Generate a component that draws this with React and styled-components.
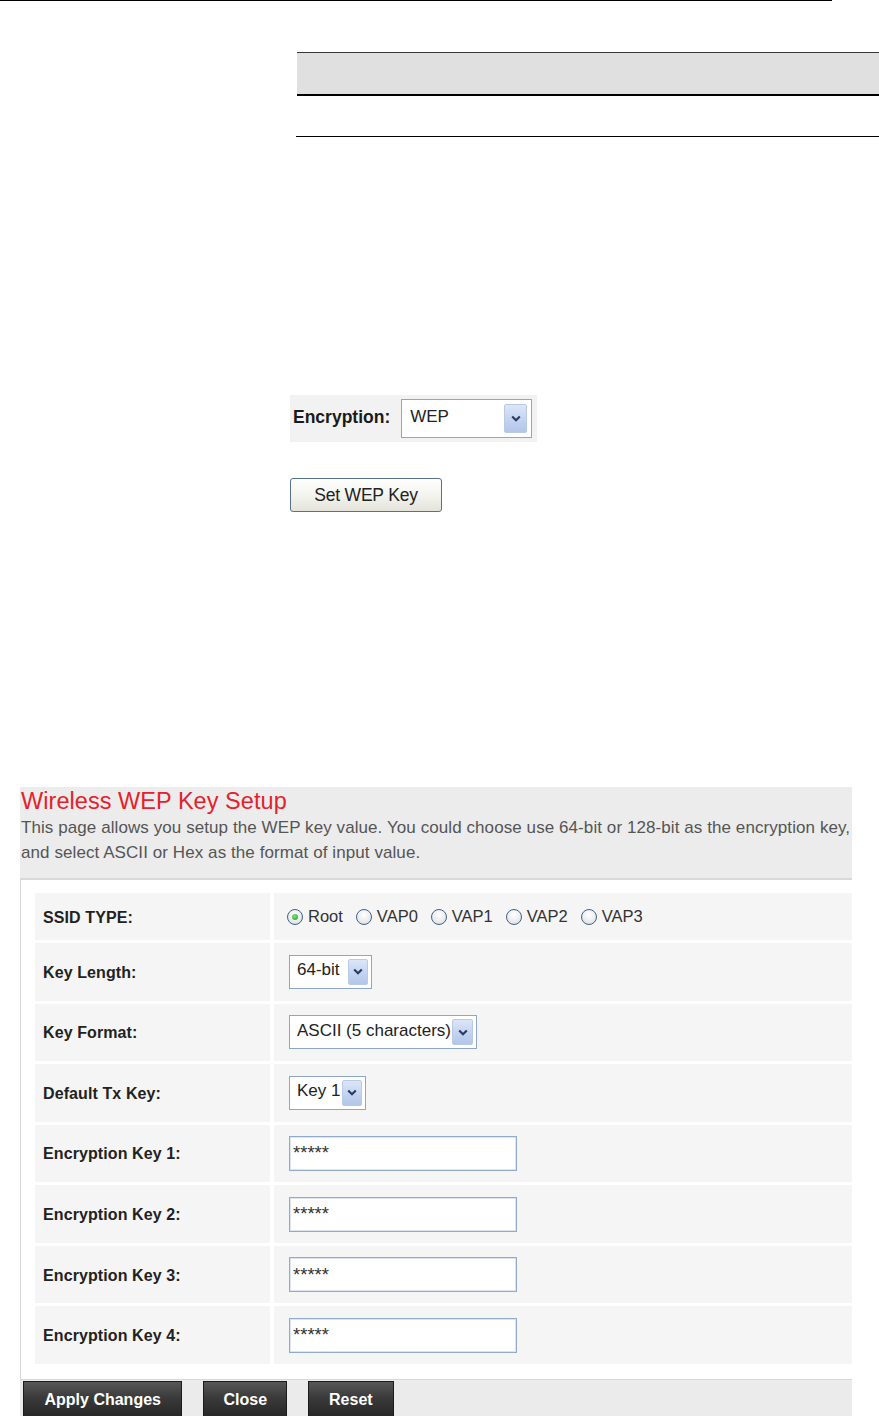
import React from "react";
import styled, { createGlobalStyle, css } from "styled-components";

const GlobalStyle = createGlobalStyle`
  *, *::before, *::after { box-sizing: border-box; }
  html, body { margin: 0; padding: 0; background: #fff; overflow: hidden; }
  body { font-family: "Liberation Sans", Arial, sans-serif; color: #222; }
`;

const Page = styled.div`
  width: 879px;
  height: 1416px;
  overflow: hidden;
  display: flex;
  flex-direction: column;
  align-items: flex-start;
`;

const TopRule = styled.div`
  width: 832px;
  height: 1px;
  background: #000;
  flex: none;
`;

const DocBlock = styled.div`
  margin: 51px 0 0 297px;
  width: 582px;
  display: flex;
  flex-direction: column;
  flex: none;
`;

const ShadedBar = styled.div`
  height: 44px;
  background: #e0e0e0;
  border-top: 1px solid #3a3a3a;
  border-bottom: 2px solid #000;
`;

const ThinRule = styled.div`
  height: 1px;
  margin: 40px 0 0 -1px;
  background: #000;
`;

const EncPanel = styled.div`
  margin: 258px 0 0 290px;
  width: 247px;
  height: 47px;
  background: #f2f2f2;
  display: flex;
  align-items: center;
  padding-left: 3px;
  gap: 11px;
  flex: none;
`;

const EncLabel = styled.span`
  font-weight: bold;
  font-size: 17.5px;
  color: #1a1a1a;
  margin-top: -3px;
`;

const SelectBox = styled.div`
  width: ${(p) => p.$w}px;
  height: ${(p) => p.$h}px;
  background: #fff;
  border: 1px solid #8ea7c9;
  display: flex;
  align-items: center;
  padding: ${(p) => p.$inset}px;
  padding-left: ${(p) => p.$padLeft}px;
  flex: none;
`;

const SelectText = styled.span`
  flex: 1;
  font-size: ${(p) => p.$fs}px;
  color: #222;
  white-space: nowrap;
  align-self: ${(p) => (p.$top ? "flex-start" : "center")};
  margin-top: ${(p) => (p.$top ? "3px" : "-3px")};
`;

const ArrowBtn = styled.span`
  width: ${(p) => p.$w}px;
  height: 100%;
  flex: none;
  border: 1px solid #b9c9e6;
  border-radius: 2px;
  background: linear-gradient(#dce6f8, #c3d3f0 55%, #b3c6ea);
  display: flex;
  align-items: center;
  justify-content: center;
`;

const Chevron = () => (
  <svg width="10" height="7" viewBox="0 0 10 7" aria-hidden="true">
    <path d="M1.2 1.5 L5 5.2 L8.8 1.5" fill="none" stroke="#2a3c66" strokeWidth="2.2" strokeLinejoin="miter" />
  </svg>
);

const SetKeyButton = styled.button`
  margin: 36px 0 0 290px;
  width: 152px;
  height: 34px;
  flex: none;
  border: 1px solid #56708f;
  border-radius: 3px;
  background: linear-gradient(#fefefe, #f4f4ef 50%, #e4e4dc);
  font-family: "Liberation Sans", Arial, sans-serif;
  font-size: 17.5px;
  color: #222;
  padding: 0;
  letter-spacing: -0.2px;
`;

const Setup = styled.section`
  margin: 275px 0 0 20px;
  width: 832px;
  flex: none;
  display: flex;
  flex-direction: column;
`;

const Header = styled.header`
  background: #ececec;
  padding: 1px 0 13px 1px;
  border-bottom: 2px solid #d9d9d9;
`;

const Title = styled.h1`
  margin: 0;
  font-size: 23.5px;
  line-height: 27px;
  font-weight: normal;
  color: #e5222b;
  letter-spacing: 0.05px;
`;

const Desc = styled.p`
  margin: 0;
  font-size: 17px;
  line-height: 25px;
  color: #555;
  white-space: nowrap;
  letter-spacing: 0.08px;
`;

const Body = styled.div`
  background: #fff;
  border-left: 1px solid #d6d6d6;
  padding: 13px 0 15px 14px;
`;

const Grid = styled.div`
  display: grid;
  grid-template-columns: 235px 1fr;
  grid-template-rows: 47px repeat(7, 1fr);
  height: 471px;
  column-gap: 4px;
  row-gap: 3px;
`;

const LabelCell = styled.div`
  background: #f5f5f5;
  display: flex;
  align-items: center;
  padding: 2px 0 0 8px;
  font-weight: bold;
  font-size: 16px;
  color: #222;
  letter-spacing: 0.1px;
`;

const ValueCell = styled.div`
  background: #f5f5f5;
  display: flex;
  align-items: center;
  padding-left: 15px;
`;

const RadioGroup = styled.div`
  display: flex;
  align-items: center;
  gap: 13px;
  margin-left: -2px;
`;

const RadioItem = styled.label`
  display: flex;
  align-items: center;
  gap: 5px;
  font-size: 16.5px;
  color: #333;
`;

const RadioDot = styled.span`
  width: 16px;
  height: 16px;
  border-radius: 50%;
  border: 1px solid #3f6288;
  background: radial-gradient(circle at 50% 35%, #ffffff 0%, #f0f0f0 45%, #d4d8de 100%);
  display: flex;
  align-items: center;
  justify-content: center;
  flex: none;
  ${(p) =>
    p.$on &&
    css`
      &::after {
        content: "";
        width: 6px;
        height: 6px;
        border-radius: 50%;
        background: radial-gradient(circle at 40% 35%, #7de37d, #1c9e2c);
      }
    `}
`;

const TextInput = styled.input`
  width: 228px;
  height: 35px;
  border: 1px solid #93abcb;
  box-shadow: inset 0 0 0 1px #dbe4f0;
  background: #fff;
  padding: 0 0 0 3px;
  font-family: "Liberation Sans", Arial, sans-serif;
  font-size: 18.5px;
  color: #333;
  letter-spacing: 0;
  outline: none;
`;

const ButtonBar = styled.div`
  background: #ebebeb;
  border-top: 1px solid #d8d8d8;
  padding: 1px 0 0 3px;
  display: flex;
  gap: 21px;
  height: 40px;
`;

const DarkButton = styled.button`
  height: 37px;
  padding: 0 ${(p) => p.$pad}px;
  border: 1px solid #1b1b1b;
  background: linear-gradient(#575757, #3a3a3a 45%, #262626);
  color: #fff;
  font-family: "Liberation Sans", Arial, sans-serif;
  font-weight: bold;
  font-size: 16px;
  letter-spacing: 0;
  flex: none;
`;

const Select = ({ value, w, h = 34, inset = 3, arrowW = 20, fs = 17, padLeft = 7, top }) => (
  <SelectBox $w={w} $h={h} $inset={inset} $padLeft={padLeft}>
    <SelectText $fs={fs} $top={top}>{value}</SelectText>
    <ArrowBtn $w={arrowW}>
      <Chevron />
    </ArrowBtn>
  </SelectBox>
);

const radios = ["Root", "VAP0", "VAP1", "VAP2", "VAP3"];

const rows = [
  { label: "SSID TYPE:", kind: "radio" },
  { label: "Key Length:", kind: "select", value: "64-bit", w: 83 },
  { label: "Key Format:", kind: "select", value: "ASCII (5 characters)", w: 188, arrowW: 21 },
  { label: "Default Tx Key:", kind: "select", value: "Key 1", w: 77 },
  { label: "Encryption Key 1:", kind: "input" },
  { label: "Encryption Key 2:", kind: "input" },
  { label: "Encryption Key 3:", kind: "input" },
  { label: "Encryption Key 4:", kind: "input" },
];

const renderValue = (r) => {
  if (r.kind === "radio") {
    return (
      <RadioGroup>
        {radios.map((name, i) => (
          <RadioItem key={name}>
            <RadioDot $on={i === 0} />
            {name}
          </RadioItem>
        ))}
      </RadioGroup>
    );
  }
  if (r.kind === "select") {
    return <Select value={r.value} w={r.w} arrowW={r.arrowW || 20} />;
  }
  return <TextInput type="text" readOnly value="*****" />;
};

export default function App() {
  return (
    <>
      <GlobalStyle />
      <Page>
        <TopRule />
        <DocBlock>
          <ShadedBar />
          <ThinRule />
        </DocBlock>

        <EncPanel>
          <EncLabel>Encryption:</EncLabel>
          <Select value="WEP" w={131} h={39} inset={4} arrowW={23} fs={17} padLeft={8} top />
        </EncPanel>

        <SetKeyButton type="button">Set WEP Key</SetKeyButton>

        <Setup>
          <Header>
            <Title>Wireless WEP Key Setup</Title>
            <Desc>
              This page allows you setup the WEP key value. You could choose use 64-bit or 128-bit as the encryption key,
              <br />
              and select ASCII or Hex as the format of input value.
            </Desc>
          </Header>
          <Body>
            <Grid>
              {rows.map((r) => (
                <React.Fragment key={r.label}>
                  <LabelCell>{r.label}</LabelCell>
                  <ValueCell>{renderValue(r)}</ValueCell>
                </React.Fragment>
              ))}
            </Grid>
          </Body>
          <ButtonBar>
            <DarkButton type="button" $pad={20.5}>Apply Changes</DarkButton>
            <DarkButton type="button" $pad={19}>Close</DarkButton>
            <DarkButton type="button" $pad={20}>Reset</DarkButton>
          </ButtonBar>
        </Setup>
      </Page>
    </>
  );
}
